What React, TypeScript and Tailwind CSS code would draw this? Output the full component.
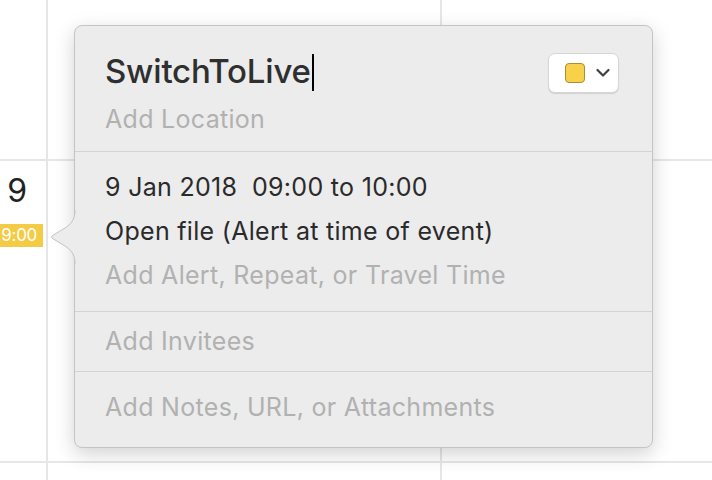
import React from "react";

function ColorButton() {
  return (
    <button className="flex h-[40px] w-[71px] items-center gap-[11px] rounded-[7px] border border-[#d6d6d6] bg-white pl-[16px] shadow-[0_1px_1px_rgba(0,0,0,0.12)]">
      <span className="h-[20px] w-[20px] rounded-[4px] border-[1.5px] border-[#a88f37] bg-[#f8d04a]" />
      <svg width="14" height="10" viewBox="0 0 14 10" fill="none">
        <path d="M1.5 2 L7 7.5 L12.5 2" stroke="#404040" strokeWidth="2.2" strokeLinecap="round" strokeLinejoin="round" />
      </svg>
    </button>
  );
}

function Arrow() {
  return (
    <svg
      className="absolute left-[-25px] top-[184px]"
      width="28"
      height="54"
      viewBox="0 0 28 54"
    >
      <path
        d="M28 0 L25 0 C25 10 21 14 15 18 L2.5 25.5 Q0.5 27 2.5 28.5 L15 36 C21 40 25 44 25 54 L28 54 Z"
        fill="#ececec"
      />
      <path
        d="M25 0 C25 10 21 14 15 18 L2.5 25.5 Q0.5 27 2.5 28.5 L15 36 C21 40 25 44 25 54"
        fill="none"
        stroke="#c4c4c4"
        strokeWidth="1"
      />
    </svg>
  );
}

function EventPopover() {
  return (
    <div className="absolute left-[74px] top-[25px] h-[423px] w-[579px] rounded-[8px] border border-[#c4c4c4] bg-[#ececec] shadow-[0_6px_20px_rgba(0,0,0,0.18)]">
      <Arrow />
      <div className="flex flex-col px-[30px]">
        <div className="flex items-start justify-between pt-[26px]">
          <div className="flex h-[40px] items-center text-[33px] font-medium tracking-[-0.2px] text-[#2f2f2f]">
            SwitchToLive
            <span className="ml-[1px] inline-block h-[37px] w-[2px] bg-black" />
          </div>
          <div className="mr-[3px] pt-[1px]">
            <ColorButton />
          </div>
        </div>
        <div className="mt-[10px] h-[32px] text-[25px] leading-[32px] tracking-[0.3px] text-[#b1b1b1]">
          Add Location
        </div>
      </div>
      <div className="mt-[16px] border-t border-[#d3d3d3] px-[30px] pb-[14px] pt-[13px] text-[25px] leading-[44px] tracking-[0.3px]">
        <div className="text-[#2a2a2a]">9 Jan 2018&nbsp;&nbsp;09:00 to 10:00</div>
        <div className="text-[#2a2a2a]">Open file (Alert at time of event)</div>
        <div className="text-[#b1b1b1]">Add Alert, Repeat, or Travel Time</div>
      </div>
      <div className="border-t border-[#d3d3d3] px-[30px] pb-[8px] pt-[7px] text-[25px] leading-[44px] tracking-[0.3px] text-[#b1b1b1]">
        Add Invitees
      </div>
      <div className="border-t border-[#d3d3d3] px-[30px] pt-[13px] text-[25px] leading-[44px] tracking-[0.3px] text-[#b1b1b1]">
        Add Notes, URL, or Attachments
      </div>
    </div>
  );
}

export default function App() {
  return (
    <div
      className="relative h-[480px] w-[712px] overflow-hidden bg-white"
      style={{ fontFamily: "Inter, 'Noto Sans', sans-serif" }}
    >
      <div className="grid h-full grid-cols-[48px_394px_1fr] grid-rows-[161px_302px_1fr]">
        <div className="border-b-2 border-r-2 border-[#e6e6e6]" />
        <div className="border-b-2 border-r-2 border-[#e6e6e6]" />
        <div className="border-b-2 border-[#e6e6e6]" />
        <div className="border-b-2 border-r-2 border-[#e6e6e6] pt-[10px]">
          <div className="pr-[19px] text-right text-[32px] leading-[40px] text-[#222]">9</div>
          <div className="mr-[3px] mt-[13px] flex h-[23px] justify-end bg-[#f4cb45] pr-[6px] text-[17px] leading-[23px] tracking-[-0.3px] text-white">
            9:00
          </div>
        </div>
        <div className="border-b-2 border-r-2 border-[#e6e6e6]" />
        <div className="border-b-2 border-[#e6e6e6]" />
        <div className="border-r-2 border-[#e6e6e6]" />
        <div className="border-r-2 border-[#e6e6e6]" />
        <div />
      </div>
      <EventPopover />
    </div>
  );
}
